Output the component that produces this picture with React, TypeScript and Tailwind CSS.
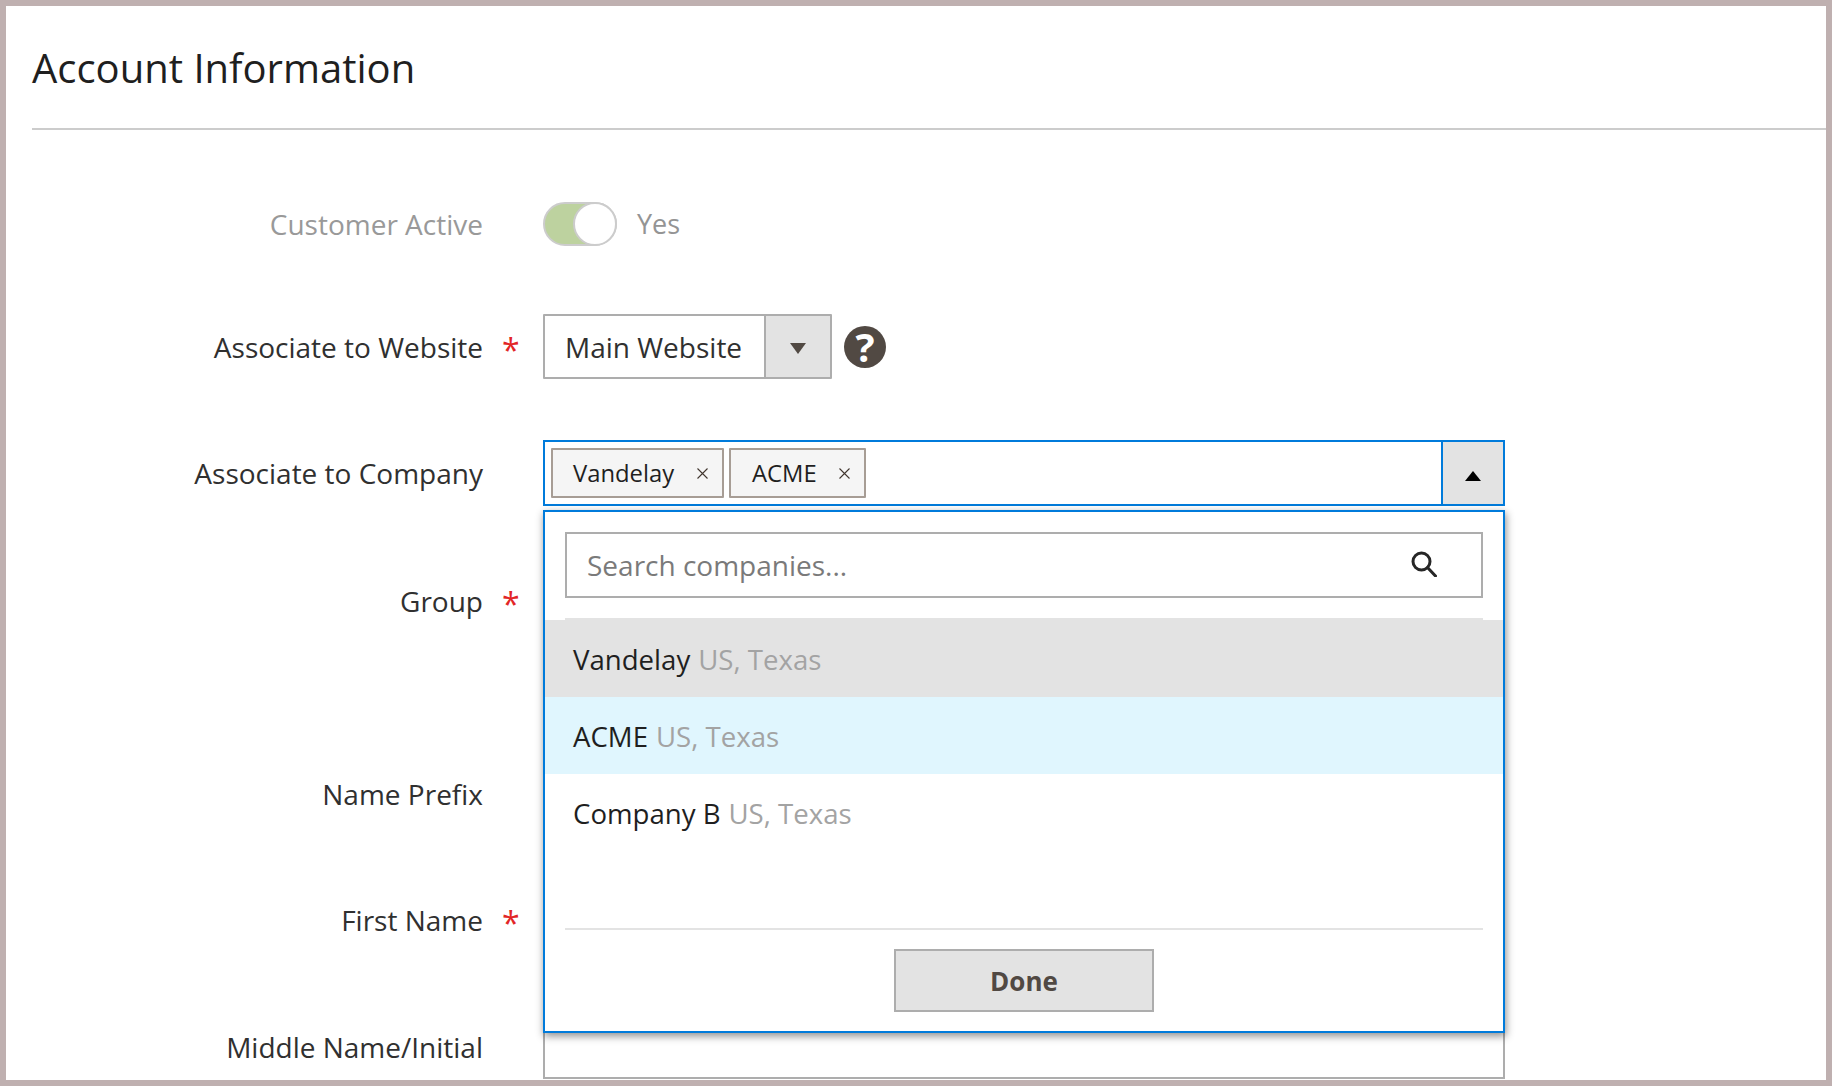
import React from "react";

const font = { fontFamily: '"Open Sans", sans-serif' };

function Label({ text, required, muted }: { text: string; required?: boolean; muted?: boolean }) {
  return (
    <div className="relative w-[483px] shrink-0 text-right">
      <span className={muted ? "text-[#999999]" : "text-[#303030]"}>{text}</span>
      {required && (
        <span className="absolute left-[502px] top-[3px] text-[32px] leading-[36px] text-[#e22626]">*</span>
      )}
    </div>
  );
}

function Row({ className, children }: { className: string; children: React.ReactNode }) {
  return <div className={`flex items-center ${className}`}>{children}</div>;
}

function Field() {
  return <div className="ml-[60px] h-[65px] w-[962px] border-2 border-[#adadad] bg-white" />;
}

function Option({ name, bg }: { name: string; bg: string }) {
  return (
    <div className={`flex h-[77px] items-center gap-[8px] pl-[28px] text-[27.6px] text-[#1f1f1f] ${bg}`}>
      <span>{name}</span>
      <span className="text-[#a3a3a3]">US, Texas</span>
    </div>
  );
}

function Chip({ name, className }: { name: string; className: string }) {
  return (
    <div className={`flex h-[50px] items-center justify-between rounded-[1px] border-2 border-[#a79d95] bg-[#f5f5f5] text-[23.8px] text-[#1f1f1f] ${className}`}>
      <span>{name}</span>
      <svg width="11" height="11" viewBox="0 0 11 11" fill="none" stroke="#41362f" strokeWidth="1.1">
        <path d="M0.5 0.5L10.5 10.5M10.5 0.5L0.5 10.5" />
      </svg>
    </div>
  );
}

export default function App() {
  return (
    <div style={font} className="box-border h-[1086px] w-[1832px] overflow-hidden border-[6px] border-[#bfb0b0] bg-white">
      <div className="relative h-[1074px] overflow-hidden pl-[26px] text-[28px] leading-[36px] text-[#303030]">
        <h1 className="h-[124px] border-b-2 border-[#cccccc] pt-[35px] text-[40px] leading-[54px] font-normal text-[#1f1f1f]">
          Account Information
        </h1>

        <div className="-ml-[32px]">
          <Row className="mt-[72px] h-[44px]">
            <Label text="Customer Active" muted />
            <div className="relative ml-[60px] h-[44px] w-[74px] rounded-full border-2 border-[#cccccc] bg-[#bdd29f]">
              <div className="absolute right-[-2px] top-[-2px] h-[44px] w-[44px] rounded-full border-2 border-[#cccccc] bg-white" />
            </div>
            <span className="ml-[20px] text-[27px] text-[#949494]">Yes</span>
          </Row>

          <Row className="mt-[68px] h-[65px]">
            <Label text="Associate to Website" required />
            <div className="ml-[60px] flex h-[65px] w-[289px] rounded-[1px] border-2 border-[#adadad] bg-white">
              <div className="flex flex-1 items-center pl-[20px] text-[#303030]">Main Website</div>
              <div className="flex w-[66px] items-center justify-center border-l-2 border-[#adadad] bg-[#e3e3e3]">
                <svg width="16" height="11" viewBox="0 0 16 11" className="mt-[4px]"><path d="M0 0H16L8 11Z" fill="#514943" /></svg>
              </div>
            </div>
            <div className="ml-[12px] flex h-[42px] w-[42px] items-center justify-center rounded-full bg-[#514943] text-[40px] leading-none font-bold text-white">?</div>
          </Row>

          <Row className="mt-[61px] h-[66px]">
            <Label text="Associate to Company" />
            <div className="ml-[60px] flex h-[66px] w-[962px] border-2 border-[#007bdb] bg-white">
              <div className="flex flex-1 gap-[5px] pl-[6px] pt-[6px]">
                <Chip name="Vandelay" className="w-[173px] pl-[20px] pr-[14px]" />
                <Chip name="ACME" className="w-[137px] pl-[21px] pr-[14px]" />
              </div>
              <div className="flex w-[62px] items-center justify-center border-l-2 border-[#007bdb] bg-[#e3e3e3]">
                <svg width="16" height="10" viewBox="0 0 16 10" className="mt-[6px]"><path d="M8 0L16 10H0Z" fill="#000000" /></svg>
              </div>
            </div>
          </Row>

          <Row className="mt-[62px] h-[65px]">
            <Label text="Group" required />
            <Field />
          </Row>
          <Row className="mt-[128px] h-[65px]">
            <Label text="Name Prefix" />
            <Field />
          </Row>
          <Row className="mt-[61px] h-[65px]">
            <Label text="First Name" required />
            <Field />
          </Row>
          <Row className="mt-[62px] h-[65px]">
            <Label text="Middle Name/Initial" />
            <Field />
          </Row>
        </div>

        <div className="absolute left-[537px] top-[504px] box-border h-[523px] w-[962px] border-2 border-[#007bdb] bg-white shadow-[1px_3px_8px_rgba(0,0,0,0.45)]">
          <div className="mx-[20px] mt-[20px] flex h-[66px] items-center justify-between border-2 border-[#adadad] pl-[20px] pr-[44px] text-[28px] text-[#7a7a7a]">
            <span>Search companies...</span>
            <svg width="26" height="26" viewBox="0 0 26 26" fill="none" stroke="#262626" strokeWidth="3" className="mt-[-2px]">
              <circle cx="10.5" cy="10.5" r="8.5" />
              <path d="M16.5 16.5L24.5 25" strokeLinecap="round" />
            </svg>
          </div>
          <div className="mx-[20px] mt-[20px] h-[2px] bg-[#e3e3e3]" />
          <Option name="Vandelay" bg="bg-[#e3e3e3]" />
          <Option name="ACME" bg="bg-[#e0f6fe]" />
          <Option name="Company B" bg="bg-white" />
          <div className="mx-[20px] mt-[77px] h-[2px] bg-[#e3e3e3]" />
          <div className="mt-[19px] flex justify-center">
            <button className="h-[63px] w-[260px] border-2 border-[#adadad] bg-[#e3e3e3] text-[26px] font-bold text-[#514943]">Done</button>
          </div>
        </div>
      </div>
    </div>
  );
}
